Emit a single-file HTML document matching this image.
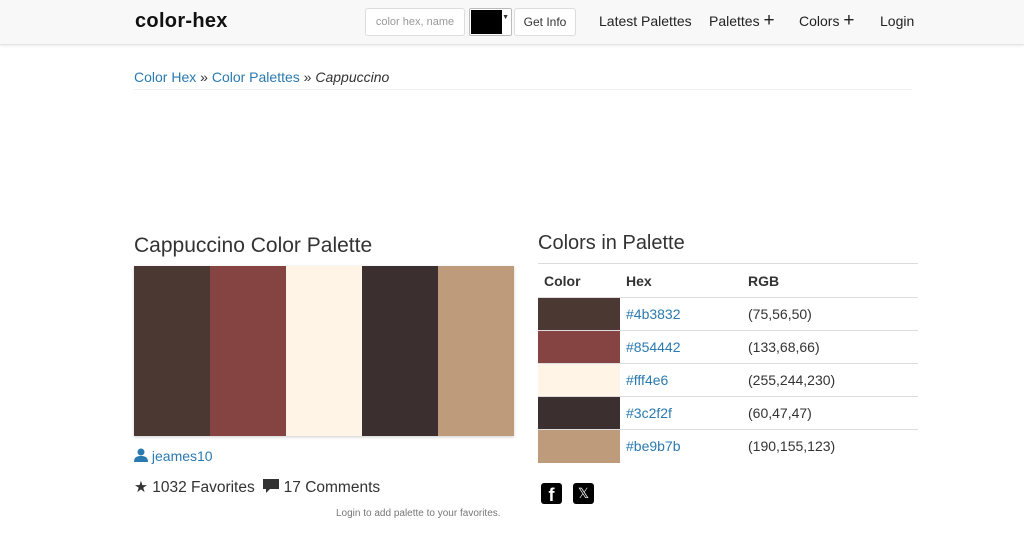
<!DOCTYPE html>
<html><head><style>
body{margin:0;width:1024px;height:540px;overflow:hidden;background:#fff;font-family:"Liberation Sans",sans-serif;color:#333;position:relative}
.hdr{position:absolute;left:0;top:0;width:1024px;height:44px;background:#f8f8f8;border-bottom:1px solid #e4e4e4;box-shadow:0 1px 3px rgba(0,0,0,.08)}
.a{position:absolute;white-space:nowrap}
a,.l{color:#2a7ab0;text-decoration:none}
table{border-collapse:collapse}
td,th{padding:0}
</style></head><body>
<div class="hdr">
<div class="a" style="left:135px;top:10px;font-size:20px;color:#111;font-weight:bold;letter-spacing:.3px">color-hex</div>
<div class="a" style="left:365px;top:8px;width:98px;height:26px;border:1px solid #ddd;border-radius:3px;background:#fff;font-size:11px;color:#999;line-height:26px;text-align:center">color hex, name</div>
<div class="a" style="left:469px;top:8px;width:41px;height:26px;border:1px solid #bbb;border-radius:2px;background:#fff"><div style="margin:1px;width:31px;height:24px;background:#000"></div><span style="position:absolute;right:2px;top:5px;font-size:7px">▼</span></div>
<div class="a" style="left:514px;top:8px;width:60px;height:26px;border:1px solid #ddd;border-radius:3px;background:#fff;font-size:12px;line-height:26px;text-align:center">Get Info</div>
<div class="a" style="left:599px;top:13px;font-size:14px;color:#222">Latest Palettes</div>
<div class="a" style="left:709px;top:13px;font-size:14px;color:#222">Palettes <span style="font-size:19px;line-height:14px">+</span></div>
<div class="a" style="left:799px;top:13px;font-size:14px;color:#222">Colors <span style="font-size:19px;line-height:14px">+</span></div>
<div class="a" style="left:880px;top:13px;font-size:14px;color:#222">Login</div>
</div>
<div class="a" style="left:134px;top:69px;font-size:14px"><span class="l">Color Hex</span> » <span class="l">Color Palettes</span> » <i>Cappuccino</i></div>
<div class="a" style="left:134px;top:89px;width:778px;border-top:1px solid #f0f0f0"></div>
<div class="a" style="left:134px;top:234px;font-size:21px">Cappuccino Color Palette</div>
<div class="a" style="left:134px;top:266px;width:380px;height:170px;display:flex;box-shadow:0 1px 3px rgba(0,0,0,.2)">
<div style="flex:1;background:#4b3832"></div><div style="flex:1;background:#854442"></div><div style="flex:1;background:#fff4e6"></div><div style="flex:1;background:#3c2f2f"></div><div style="flex:1;background:#be9b7b"></div></div>
<div class="a l" style="left:134px;top:448px;font-size:14px"><svg width="14" height="14" viewBox="0 0 14 14" style="vertical-align:-1px"><circle cx="7" cy="4" r="3.5" fill="#2a7ab0"/><path d="M0 14c0-5 3-6 7-6s7 1 7 6z" fill="#2a7ab0"/></svg> jeames10</div>
<div class="a" style="left:134px;top:478px;font-size:15.5px">★ 1032 Favorites &nbsp;<svg width="16" height="14" viewBox="0 0 16 14" style="vertical-align:-1px"><path d="M0 0h16v10H7l-4 4v-4H0z" fill="#333"/></svg> 17 Comments</div>
<div class="a" style="left:336px;top:508px;font-size:10px;color:#777">Login to add palette to your favorites.</div>
<div class="a" style="left:538px;top:232px;font-size:20px">Colors in Palette</div>
<table class="a" style="left:538px;top:263px;width:380px;font-size:14px">
<tr style="height:34px;border-top:1px solid #ddd"><th style="text-align:left;width:76px;padding-left:6px">Color</th><th style="text-align:left;width:122px;padding-left:6px">Hex</th><th style="text-align:left">RGB</th></tr>
<tr style="height:33px;border-top:1px solid #ddd"><td style="background:#4b3832"></td><td class="l" style="padding-left:6px">#4b3832</td><td>(75,56,50)</td></tr>
<tr style="height:33px;border-top:1px solid #ddd"><td style="background:#854442"></td><td class="l" style="padding-left:6px">#854442</td><td>(133,68,66)</td></tr>
<tr style="height:33px;border-top:1px solid #ddd"><td style="background:#fff4e6"></td><td class="l" style="padding-left:6px">#fff4e6</td><td>(255,244,230)</td></tr>
<tr style="height:33px;border-top:1px solid #ddd"><td style="background:#3c2f2f"></td><td class="l" style="padding-left:6px">#3c2f2f</td><td>(60,47,47)</td></tr>
<tr style="height:33px;border-top:1px solid #ddd"><td style="background:#be9b7b"></td><td class="l" style="padding-left:6px">#be9b7b</td><td>(190,155,123)</td></tr>
</table>
<div class="a" style="left:541px;top:483px;width:21px;height:21px;background:#000;border-radius:3px;color:#fff;font-weight:bold;font-size:18px;text-align:center;line-height:24px">f</div>
<div class="a" style="left:573px;top:483px;width:21px;height:21px;background:#000;border-radius:3px;color:#fff;font-size:14px;text-align:center;line-height:21px">𝕏</div>
</body></html>
